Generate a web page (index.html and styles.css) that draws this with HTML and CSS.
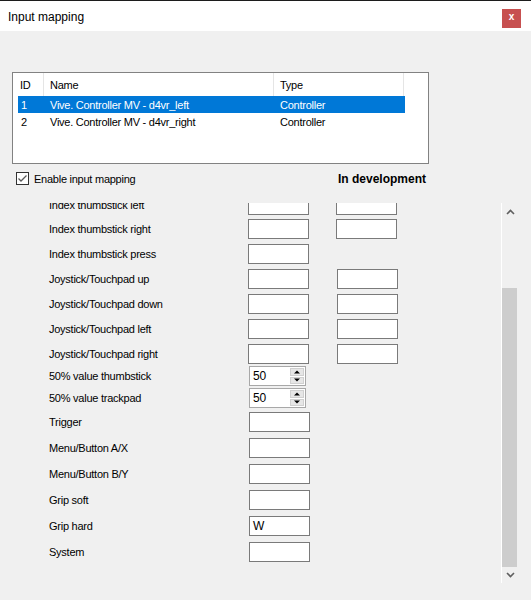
FILE: index.html
```html
<!DOCTYPE html>
<html>
<head>
<meta charset="utf-8">
<link rel="stylesheet" href="styles.css">
</head>
<body>
<div class="window">
  <div class="titlebar">
    <span class="title">Input mapping</span>
    <span class="close">x</span>
  </div>
  <div class="listbox">
    <div class="lv-header">
      <div class="hcell c-id">ID</div>
      <div class="hcell c-name">Name</div>
      <div class="hcell c-type">Type</div>
    </div>
    <div class="lv-row selected">
      <div class="rc r-id">1</div>
      <div class="rc r-name">Vive. Controller MV - d4vr_left</div>
      <div class="rc r-type">Controller</div>
    </div>
    <div class="lv-row">
      <div class="rc r-id">2</div>
      <div class="rc r-name">Vive. Controller MV - d4vr_right</div>
      <div class="rc r-type">Controller</div>
    </div>
  </div>
  <div class="checkrow">
    <label class="check">
      <span class="box"><svg width="11" height="11" viewBox="0 0 11 11"><path d="M1.5 5.5 L4 8 L9.5 2.5" fill="none" stroke="#5a5a5a" stroke-width="1.3"/></svg></span>
      <span>Enable input mapping</span>
    </label>
    <span class="devnote">In development</span>
  </div>
  <div class="panel">
    <div class="viewport">
      <div class="content">
        <div class="row first"><span class="lbl">Index thumbstick left</span><span class="inp"></span><span class="inp second"></span></div>
        <div class="row g4"><span class="lbl">Index thumbstick right</span><span class="inp"></span><span class="inp second"></span></div>
        <div class="row"><span class="lbl">Index thumbstick press</span><span class="inp"></span></div>
        <div class="row"><span class="lbl">Joystick/Touchpad up</span><span class="inp"></span><span class="inp second js"></span></div>
        <div class="row"><span class="lbl">Joystick/Touchpad down</span><span class="inp"></span><span class="inp second js"></span></div>
        <div class="row"><span class="lbl">Joystick/Touchpad left</span><span class="inp"></span><span class="inp second js"></span></div>
        <div class="row"><span class="lbl">Joystick/Touchpad right</span><span class="inp"></span><span class="inp second js"></span></div>
        <div class="row g2"><span class="lbl">50% value thumbstick</span><span class="spin"><span class="val">50</span><span class="btns"><span class="sb up"></span><span class="sb down"></span></span></span></div>
        <div class="row g2"><span class="lbl">50% value trackpad</span><span class="spin"><span class="val">50</span><span class="btns"><span class="sb up"></span><span class="sb down"></span></span></span></div>
        <div class="row g4 late"><span class="lbl">Trigger</span><span class="inp"></span></div>
        <div class="row g6 late"><span class="lbl">Menu/Button A/X</span><span class="inp"></span></div>
        <div class="row g6 late"><span class="lbl">Menu/Button B/Y</span><span class="inp"></span></div>
        <div class="row g6 late"><span class="lbl">Grip soft</span><span class="inp"></span></div>
        <div class="row g6 late"><span class="lbl">Grip hard</span><span class="inp">W</span></div>
        <div class="row g6 late"><span class="lbl">System</span><span class="inp"></span></div>
      </div>
    </div>
    <div class="scrollbar">
      <div class="arrow"><svg width="9" height="6" viewBox="0 0 9 6"><path d="M1 5 L4.5 1.5 L8 5" fill="none" stroke="#606060" stroke-width="1.6"/></svg></div>
      <div class="track"><div class="thumb"></div></div>
      <div class="arrow"><svg width="9" height="6" viewBox="0 0 9 6"><path d="M1 1 L4.5 4.5 L8 1" fill="none" stroke="#606060" stroke-width="1.6"/></svg></div>
    </div>
  </div>
</div>
</body>
</html>
```
FILE: styles.css
```css
html, body {
  margin: 0;
  padding: 0;
}
body {
  width: 531px;
  height: 600px;
  background: #f0f0f0;
  font-family: "Liberation Sans", Arial, sans-serif;
  font-size: 11px;
  letter-spacing: -0.25px;
  color: #000;
  overflow: hidden;
}
.window {
  width: 531px;
  height: 600px;
  border-top: 1px solid #1c1c1c;
  box-sizing: border-box;
}
.titlebar {
  height: 30px;
  background: #fff;
  display: flex;
  align-items: center;
  justify-content: space-between;
  padding-left: 8px;
  padding-right: 10px;
}
.title {
  font-size: 12px;
  letter-spacing: 0;
  margin-top: 2px;
}
.close {
  width: 19px;
  height: 19px;
  background: #c75050;
  color: #fff;
  font-weight: bold;
  font-size: 10px;
  letter-spacing: 0;
  display: flex;
  align-items: center;
  justify-content: center;
  margin-top: 4px;
  line-height: 1;
  padding-bottom: 2px;
  box-sizing: border-box;
}
.listbox {
  margin: 41px 0 0 12px;
  width: 417px;
  height: 92px;
  box-sizing: border-box;
  border: 1px solid #828282;
  background: #fff;
}
.lv-header {
  display: flex;
  height: 23px;
}
.hcell {
  border-right: 1px solid #e5e5e5;
  display: flex;
  align-items: center;
  padding-top: 1px;
  box-sizing: border-box;
}
.c-id { width: 31px; padding-left: 7px; }
.c-name { width: 230px; padding-left: 6px; }
.c-type { width: 130px; padding-left: 6px; }
.lv-row {
  display: flex;
  margin-left: 5px;
  width: 387px;
  height: 17px;
  align-items: center;
}
.lv-row.selected {
  background: #0078d7;
  color: #fff;
}
.r-id { width: 32px; padding-left: 3px; box-sizing: border-box; }
.r-name { width: 230px; }
.checkrow {
  margin: 8px 0 0 16px;
  width: 410px;
  height: 13px;
  display: flex;
  align-items: center;
  justify-content: space-between;
}
.check {
  display: flex;
  align-items: center;
}
.box {
  width: 13px;
  height: 13px;
  box-sizing: border-box;
  border: 1px solid #333;
  background: #fff;
  display: flex;
  align-items: center;
  justify-content: center;
  margin-right: 5px;
}
.devnote {
  font-weight: bold;
  font-size: 12px;
  letter-spacing: 0;
}
.panel {
  margin: 18px 0 0 12px;
  width: 506px;
  height: 380px;
  display: flex;
}
.viewport {
  width: 489px;
  height: 380px;
  overflow: hidden;
}
.content {
  margin-top: -8px;
  padding-left: 37px;
}
.row {
  display: flex;
  align-items: center;
  height: 20px;
  margin-top: 5px;
}
.row.first { margin-top: 0; }
.row.g2 { margin-top: 2px; }
.row.g4 { margin-top: 4px; }
.row.g6 { margin-top: 6px; }
.lbl {
  width: 199px;
  flex: none;
}
.inp {
  width: 61px;
  height: 20px;
  box-sizing: border-box;
  border: 1px solid #7a7a7a;
  background: #fff;
  flex: none;
  padding-left: 3px;
  line-height: 18px;
  font-size: 12px;
}
.late .inp { margin-left: 1px; }
.inp.second { margin-left: 27px; }
.inp.second.js { margin-left: 28px; }
.spin {
  margin-left: 1px;
  width: 57px;
  height: 20px;
  box-sizing: border-box;
  border: 1px solid #a8a8a8;
  background: #fff;
  display: flex;
  justify-content: space-between;
  flex: none;
}
.val {
  padding-left: 3px;
  line-height: 18px;
  font-size: 12px;
}
.btns {
  width: 15px;
  display: flex;
  flex-direction: column;
  padding: 1px 1px 1px 0;
  gap: 1px;
  box-sizing: border-box;
}
.sb {
  flex: 1;
  background: #e6e6e6;
  border: 1px solid #d0d0d0;
  position: relative;
}
.sb::after {
  content: "";
  position: absolute;
  left: 50%;
  top: 50%;
  transform: translate(-50%, -50%);
  border-left: 3px solid transparent;
  border-right: 3px solid transparent;
}
.sb.up::after { border-bottom: 3px solid #000; }
.sb.down::after { border-top: 3px solid #000; }
.scrollbar {
  width: 17px;
  height: 380px;
  border-left: 1px solid #fff;
  box-sizing: border-box;
  display: flex;
  flex-direction: column;
}
.arrow {
  height: 17px;
  display: flex;
  align-items: center;
  justify-content: center;
  flex: none;
}
.track {
  flex: 1;
  position: relative;
}
.thumb {
  position: absolute;
  left: 0;
  width: 15px;
  top: 68px;
  height: 279px;
  background: #cdcdcd;
}
```
